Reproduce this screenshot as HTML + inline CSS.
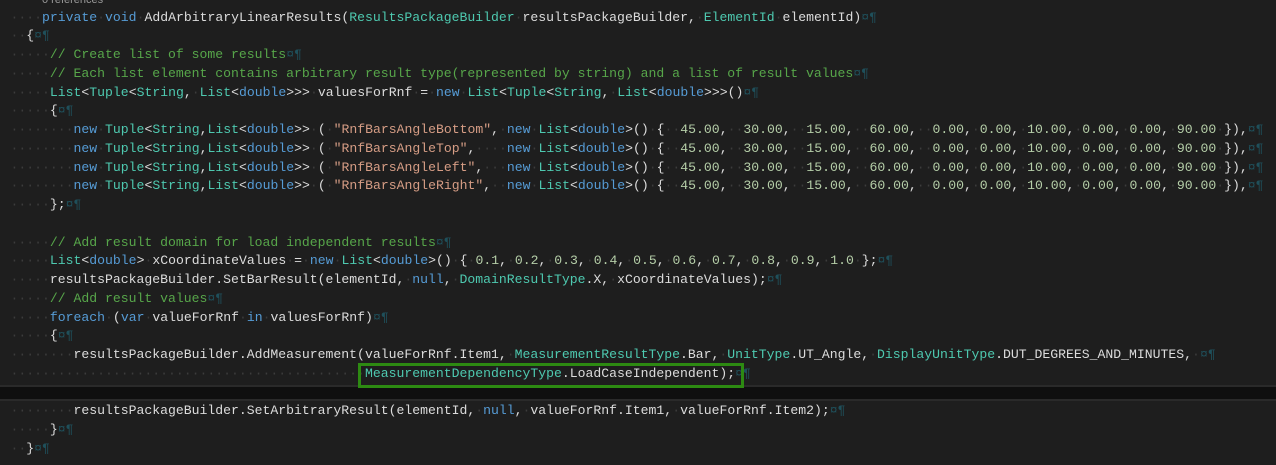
<!DOCTYPE html>
<html><head><meta charset="utf-8">
<style>
html,body{margin:0;padding:0;background:#1e1e1e;width:1276px;height:465px;overflow:hidden}
#ed{position:absolute;left:10.5px;top:8.6px;font-family:"Liberation Mono",monospace;font-size:13.13px;color:#dcdcdc;white-space:normal}
.l{height:18.75px;line-height:18.75px;white-space:pre}
.k{color:#569cd6}.t{color:#4ec9b0}.s{color:#d69d85}.c{color:#57a64a}.n{color:#b5cea8}
.d{color:#3c3c3c}.e{color:#1f4f5a}
.lens{position:absolute;left:42px;top:-6px;font-family:"Liberation Sans",sans-serif;font-size:11px;color:#999}
.cur{position:absolute;left:0;top:385px;width:1276px;height:16px;background:#0f0f0f;border-top:2px solid #2a2a2a;border-bottom:2px solid #2a2a2a;box-sizing:border-box}
.box{position:absolute;left:358px;top:363px;width:386px;height:25px;border:3px solid #2d8a12;box-sizing:border-box}
</style></head><body>
<div class="cur"></div>
<div class="lens">0 references</div>
<div id="ed"><div class="l">    <span class="k">private</span> <span class="k">void</span> AddArbitraryLinearResults(<span class="t">ResultsPackageBuilder</span> resultsPackageBuilder, <span class="t">ElementId</span> elementId)<span class="e">¤¶</span></div><div class="l">  {<span class="e">¤¶</span></div><div class="l">     <span class="c">// Create list of some results</span><span class="e">¤¶</span></div><div class="l">     <span class="c">// Each list element contains arbitrary result type(represented by string) and a list of result values</span><span class="e">¤¶</span></div><div class="l">     <span class="t">List</span>&lt;<span class="t">Tuple</span>&lt;<span class="t">String</span>, <span class="t">List</span>&lt;<span class="k">double</span>&gt;&gt;&gt; valuesForRnf = <span class="k">new</span> <span class="t">List</span>&lt;<span class="t">Tuple</span>&lt;<span class="t">String</span>, <span class="t">List</span>&lt;<span class="k">double</span>&gt;&gt;&gt;()<span class="e">¤¶</span></div><div class="l">     {<span class="e">¤¶</span></div><div class="l">        <span class="k">new</span> <span class="t">Tuple</span>&lt;<span class="t">String</span>,<span class="t">List</span>&lt;<span class="k">double</span>&gt;&gt; ( <span class="s">"RnfBarsAngleBottom"</span>, <span class="k">new</span> <span class="t">List</span>&lt;<span class="k">double</span>&gt;() {  <span class="n">45.00</span>,  <span class="n">30.00</span>,  <span class="n">15.00</span>,  <span class="n">60.00</span>,  <span class="n">0.00</span>, <span class="n">0.00</span>, <span class="n">10.00</span>, <span class="n">0.00</span>, <span class="n">0.00</span>, <span class="n">90.00</span> }),<span class="e">¤¶</span></div><div class="l">        <span class="k">new</span> <span class="t">Tuple</span>&lt;<span class="t">String</span>,<span class="t">List</span>&lt;<span class="k">double</span>&gt;&gt; ( <span class="s">"RnfBarsAngleTop"</span>,    <span class="k">new</span> <span class="t">List</span>&lt;<span class="k">double</span>&gt;() {  <span class="n">45.00</span>,  <span class="n">30.00</span>,  <span class="n">15.00</span>,  <span class="n">60.00</span>,  <span class="n">0.00</span>, <span class="n">0.00</span>, <span class="n">10.00</span>, <span class="n">0.00</span>, <span class="n">0.00</span>, <span class="n">90.00</span> }),<span class="e">¤¶</span></div><div class="l">        <span class="k">new</span> <span class="t">Tuple</span>&lt;<span class="t">String</span>,<span class="t">List</span>&lt;<span class="k">double</span>&gt;&gt; ( <span class="s">"RnfBarsAngleLeft"</span>,   <span class="k">new</span> <span class="t">List</span>&lt;<span class="k">double</span>&gt;() {  <span class="n">45.00</span>,  <span class="n">30.00</span>,  <span class="n">15.00</span>,  <span class="n">60.00</span>,  <span class="n">0.00</span>, <span class="n">0.00</span>, <span class="n">10.00</span>, <span class="n">0.00</span>, <span class="n">0.00</span>, <span class="n">90.00</span> }),<span class="e">¤¶</span></div><div class="l">        <span class="k">new</span> <span class="t">Tuple</span>&lt;<span class="t">String</span>,<span class="t">List</span>&lt;<span class="k">double</span>&gt;&gt; ( <span class="s">"RnfBarsAngleRight"</span>,  <span class="k">new</span> <span class="t">List</span>&lt;<span class="k">double</span>&gt;() {  <span class="n">45.00</span>,  <span class="n">30.00</span>,  <span class="n">15.00</span>,  <span class="n">60.00</span>,  <span class="n">0.00</span>, <span class="n">0.00</span>, <span class="n">10.00</span>, <span class="n">0.00</span>, <span class="n">0.00</span>, <span class="n">90.00</span> }),<span class="e">¤¶</span></div><div class="l">     };<span class="e">¤¶</span></div><div class="l"></div><div class="l">     <span class="c">// Add result domain for load independent results</span><span class="e">¤¶</span></div><div class="l">     <span class="t">List</span>&lt;<span class="k">double</span>&gt; xCoordinateValues = <span class="k">new</span> <span class="t">List</span>&lt;<span class="k">double</span>&gt;() { <span class="n">0.1</span>, <span class="n">0.2</span>, <span class="n">0.3</span>, <span class="n">0.4</span>, <span class="n">0.5</span>, <span class="n">0.6</span>, <span class="n">0.7</span>, <span class="n">0.8</span>, <span class="n">0.9</span>, <span class="n">1.0</span> };<span class="e">¤¶</span></div><div class="l">     resultsPackageBuilder.SetBarResult(elementId, <span class="k">null</span>, <span class="t">DomainResultType</span>.X, xCoordinateValues);<span class="e">¤¶</span></div><div class="l">     <span class="c">// Add result values</span><span class="e">¤¶</span></div><div class="l">     <span class="k">foreach</span> (<span class="k">var</span> valueForRnf <span class="k">in</span> valuesForRnf)<span class="e">¤¶</span></div><div class="l">     {<span class="e">¤¶</span></div><div class="l">        resultsPackageBuilder.AddMeasurement(valueForRnf.Item1, <span class="t">MeasurementResultType</span>.Bar, <span class="t">UnitType</span>.UT_Angle, <span class="t">DisplayUnitType</span>.DUT_DEGREES_AND_MINUTES, <span class="e">¤¶</span></div><div class="l">                                             <span class="t">MeasurementDependencyType</span>.LoadCaseIndependent);<span class="e">¤¶</span></div><div class="l"></div><div class="l">        resultsPackageBuilder.SetArbitraryResult(elementId, <span class="k">null</span>, valueForRnf.Item1, valueForRnf.Item2);<span class="e">¤¶</span></div><div class="l">     }<span class="e">¤¶</span></div><div class="l">  }<span class="e">¤¶</span></div></div>
<div class="box"></div>
<script>
(function(){
 var w=document.createTreeWalker(document.getElementById('ed'),NodeFilter.SHOW_TEXT,null,false);
 var ns=[];while(w.nextNode())ns.push(w.currentNode);
 ns.forEach(function(t){
  if(t.parentNode.className==='c'||t.parentNode.className==='s')return;
  if(t.nodeValue.indexOf(' ')<0)return;
  var f=document.createDocumentFragment();
  t.nodeValue.split(/( +)/).forEach(function(p){
   if(!p)return;
   if(p[0]===' '){var s=document.createElement('span');s.className='d';s.textContent=p.replace(/ /g,'·');f.appendChild(s);}
   else f.appendChild(document.createTextNode(p));
  });
  t.parentNode.replaceChild(f,t);
 });
})();
</script>
</body></html>
